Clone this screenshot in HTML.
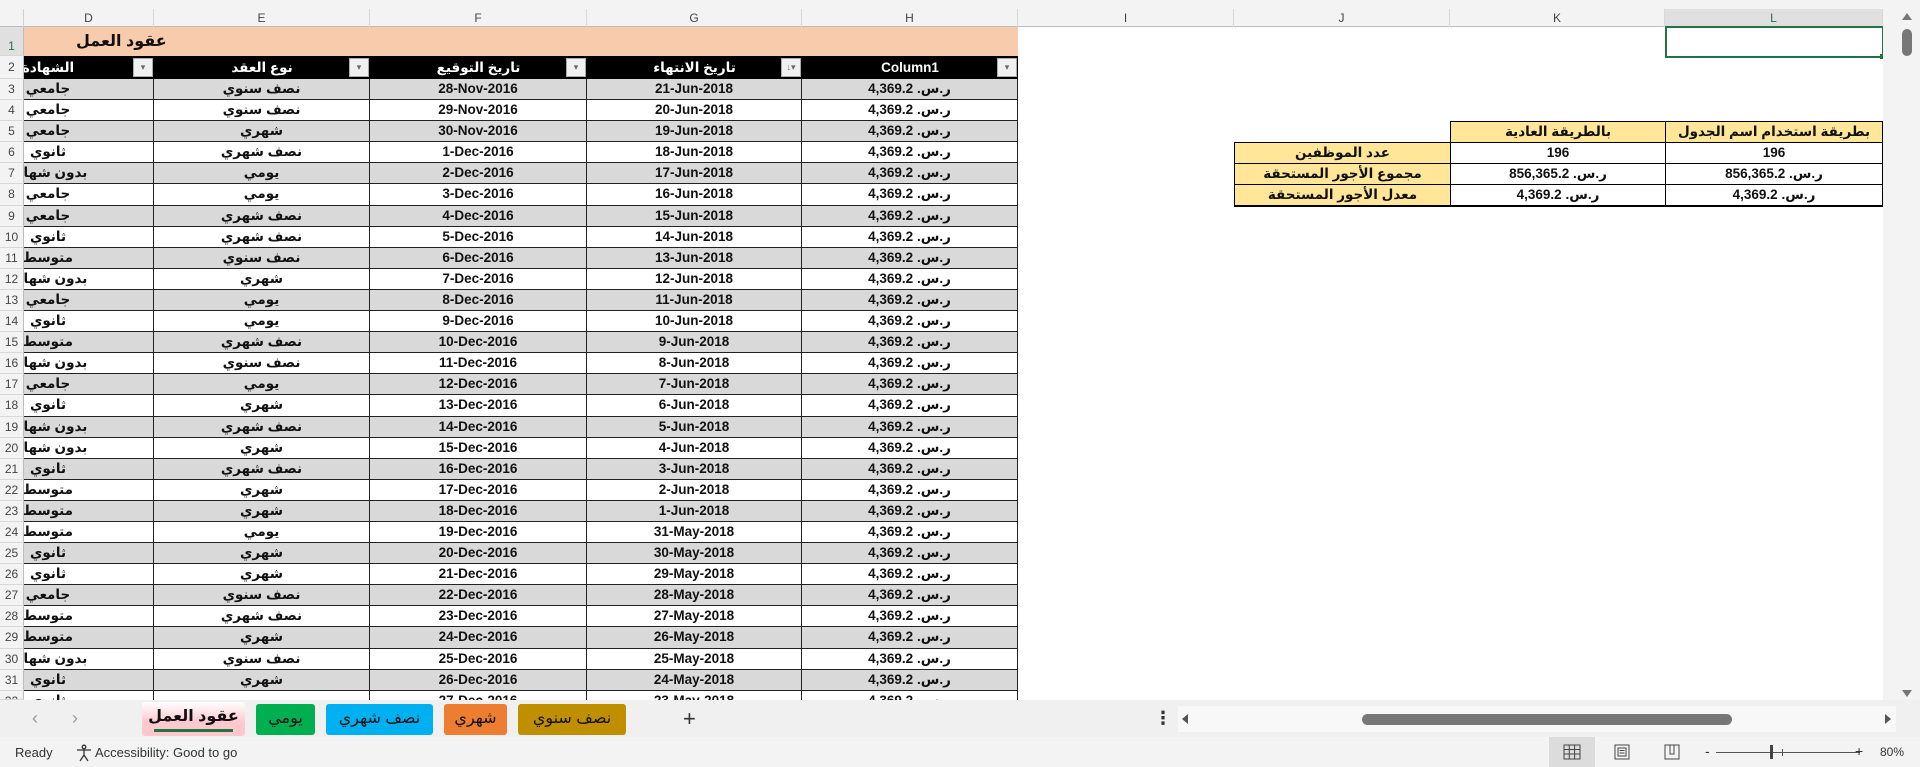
<!DOCTYPE html>
<html><head><meta charset="utf-8"><style>
*{box-sizing:border-box;margin:0;padding:0}
body{width:1920px;height:767px;overflow:hidden;background:#fff;position:relative;font-family:"Liberation Sans","DejaVu Sans",sans-serif}
.abs{position:absolute}
.top{left:0;top:0;width:1920px;height:27px;background:#f3f3f3;border-bottom:1px solid #bdbdbd}
.ch{position:absolute;top:9px;height:18px;font-size:12px;color:#444;text-align:center;line-height:18px;border-right:1px solid #d8d8d8}
.rh{position:absolute;left:0;width:24px;background:#f3f3f3;font-size:12px;color:#444;text-align:center;border-bottom:1px solid #d8d8d8;border-right:1px solid #bdbdbd}
.rows{position:absolute;left:24px;top:79px;width:994px}
.r{display:flex;height:21.1px;border-bottom:1px solid #222;font-weight:bold;font-size:13.5px;line-height:20px;color:#111}
.r.g{background:#d9d9d9}
.r>div{border-right:1px solid #222;text-align:center;overflow:hidden;white-space:nowrap;position:relative}
.d{width:130px}.d span{position:absolute;left:-76px;width:200px;text-align:center;direction:rtl}
.e{width:216px}.f{width:217px}.gg{width:215px}.h{width:216px;direction:rtl}
.hdr{position:absolute;left:24px;top:56px;width:994px;height:23px;background:#000;display:flex;color:#fff;font-weight:bold;font-size:13.5px;line-height:23px}
.hdr>div{position:relative;text-align:center;overflow:hidden;white-space:nowrap}
.btn{position:absolute;right:1px;top:2px;width:20px;height:19px;background:#f0f0f0;border:1px solid #aaa;color:#666;font-size:9px;line-height:17px;text-align:center}
.rt{position:absolute;border:1.5px solid #000;text-align:center;font-weight:bold;font-size:13.5px;line-height:19px;color:#111}
.tab{position:absolute;top:704px;height:31px;font-size:16px;line-height:29px;text-align:center;color:#111;border-radius:3px}
</style></head><body>
<div class="abs top"></div>
<div class="ch" style="left:24px;width:130px">D</div>
<div class="ch" style="left:154px;width:216px">E</div>
<div class="ch" style="left:370px;width:217px">F</div>
<div class="ch" style="left:587px;width:215px">G</div>
<div class="ch" style="left:802px;width:216px">H</div>
<div class="ch" style="left:1018px;width:216px">I</div>
<div class="ch" style="left:1234px;width:216px">J</div>
<div class="ch" style="left:1450px;width:215px">K</div>
<div class="ch" style="left:1665px;width:218px;background:#e0e0e0;color:#217346">L</div>
<div class="abs" style="left:0;top:9px;width:24px;height:18px;border-right:1px solid #d0d0d0"></div>

<!-- row headers -->
<div class="rh" style="top:27px;height:29px;line-height:38px;color:#217346;background:#e0e0e0">1</div>
<div class="rh" style="top:56px;height:23px;line-height:23px">2</div>
<div class="abs" style="left:0;top:79px;width:24px">
<div class="rh" style="position:relative;height:21.1px;line-height:21px">3</div><div class="rh" style="position:relative;height:21.1px;line-height:21px">4</div><div class="rh" style="position:relative;height:21.1px;line-height:21px">5</div><div class="rh" style="position:relative;height:21.1px;line-height:21px">6</div><div class="rh" style="position:relative;height:21.1px;line-height:21px">7</div><div class="rh" style="position:relative;height:21.1px;line-height:21px">8</div><div class="rh" style="position:relative;height:21.1px;line-height:21px">9</div><div class="rh" style="position:relative;height:21.1px;line-height:21px">10</div><div class="rh" style="position:relative;height:21.1px;line-height:21px">11</div><div class="rh" style="position:relative;height:21.1px;line-height:21px">12</div><div class="rh" style="position:relative;height:21.1px;line-height:21px">13</div><div class="rh" style="position:relative;height:21.1px;line-height:21px">14</div><div class="rh" style="position:relative;height:21.1px;line-height:21px">15</div><div class="rh" style="position:relative;height:21.1px;line-height:21px">16</div><div class="rh" style="position:relative;height:21.1px;line-height:21px">17</div><div class="rh" style="position:relative;height:21.1px;line-height:21px">18</div><div class="rh" style="position:relative;height:21.1px;line-height:21px">19</div><div class="rh" style="position:relative;height:21.1px;line-height:21px">20</div><div class="rh" style="position:relative;height:21.1px;line-height:21px">21</div><div class="rh" style="position:relative;height:21.1px;line-height:21px">22</div><div class="rh" style="position:relative;height:21.1px;line-height:21px">23</div><div class="rh" style="position:relative;height:21.1px;line-height:21px">24</div><div class="rh" style="position:relative;height:21.1px;line-height:21px">25</div><div class="rh" style="position:relative;height:21.1px;line-height:21px">26</div><div class="rh" style="position:relative;height:21.1px;line-height:21px">27</div><div class="rh" style="position:relative;height:21.1px;line-height:21px">28</div><div class="rh" style="position:relative;height:21.1px;line-height:21px">29</div><div class="rh" style="position:relative;height:21.1px;line-height:21px">30</div><div class="rh" style="position:relative;height:21.1px;line-height:21px">31</div><div class="rh" style="position:relative;height:9px;line-height:21px;overflow:hidden">32</div>
</div>

<!-- row 1 -->
<div class="abs" style="left:24px;top:27px;width:994px;height:29px;background:#f8cbad"></div>
<div class="abs" style="left:76px;top:29px;font-size:16px;font-weight:bold;line-height:26px;color:#111;direction:rtl">عقود العمل</div>

<!-- header -->
<div class="hdr">
<div style="width:130px"><span style="position:absolute;left:-76px;width:200px;text-align:center">الشهادة</span><div class="btn">▾</div></div>
<div style="width:216px">نوع العقد<div class="btn">▾</div></div>
<div style="width:217px">تاريخ التوقيع<div class="btn">▾</div></div>
<div style="width:215px">تاريخ الانتهاء<div class="btn">↓▾</div></div>
<div style="width:216px">Column1<div class="btn">▾</div></div>
</div>

<div class="abs" style="left:24px;top:79px;width:994px;height:621px;overflow:hidden">
<div class="rows" style="left:0;top:0">
<div class="r g"><div class="d"><span>جامعي</span></div><div class="e">نصف سنوي</div><div class="f">28-Nov-2016</div><div class="gg">21-Jun-2018</div><div class="h">ر.س. 4,369.2</div></div>
<div class="r"><div class="d"><span>جامعي</span></div><div class="e">نصف سنوي</div><div class="f">29-Nov-2016</div><div class="gg">20-Jun-2018</div><div class="h">ر.س. 4,369.2</div></div>
<div class="r g"><div class="d"><span>جامعي</span></div><div class="e">شهري</div><div class="f">30-Nov-2016</div><div class="gg">19-Jun-2018</div><div class="h">ر.س. 4,369.2</div></div>
<div class="r"><div class="d"><span>ثانوي</span></div><div class="e">نصف شهري</div><div class="f">1-Dec-2016</div><div class="gg">18-Jun-2018</div><div class="h">ر.س. 4,369.2</div></div>
<div class="r g"><div class="d"><span>بدون شهادة</span></div><div class="e">يومي</div><div class="f">2-Dec-2016</div><div class="gg">17-Jun-2018</div><div class="h">ر.س. 4,369.2</div></div>
<div class="r"><div class="d"><span>جامعي</span></div><div class="e">يومي</div><div class="f">3-Dec-2016</div><div class="gg">16-Jun-2018</div><div class="h">ر.س. 4,369.2</div></div>
<div class="r g"><div class="d"><span>جامعي</span></div><div class="e">نصف شهري</div><div class="f">4-Dec-2016</div><div class="gg">15-Jun-2018</div><div class="h">ر.س. 4,369.2</div></div>
<div class="r"><div class="d"><span>ثانوي</span></div><div class="e">نصف شهري</div><div class="f">5-Dec-2016</div><div class="gg">14-Jun-2018</div><div class="h">ر.س. 4,369.2</div></div>
<div class="r g"><div class="d"><span>متوسط</span></div><div class="e">نصف سنوي</div><div class="f">6-Dec-2016</div><div class="gg">13-Jun-2018</div><div class="h">ر.س. 4,369.2</div></div>
<div class="r"><div class="d"><span>بدون شهادة</span></div><div class="e">شهري</div><div class="f">7-Dec-2016</div><div class="gg">12-Jun-2018</div><div class="h">ر.س. 4,369.2</div></div>
<div class="r g"><div class="d"><span>جامعي</span></div><div class="e">يومي</div><div class="f">8-Dec-2016</div><div class="gg">11-Jun-2018</div><div class="h">ر.س. 4,369.2</div></div>
<div class="r"><div class="d"><span>ثانوي</span></div><div class="e">يومي</div><div class="f">9-Dec-2016</div><div class="gg">10-Jun-2018</div><div class="h">ر.س. 4,369.2</div></div>
<div class="r g"><div class="d"><span>متوسط</span></div><div class="e">نصف شهري</div><div class="f">10-Dec-2016</div><div class="gg">9-Jun-2018</div><div class="h">ر.س. 4,369.2</div></div>
<div class="r"><div class="d"><span>بدون شهادة</span></div><div class="e">نصف سنوي</div><div class="f">11-Dec-2016</div><div class="gg">8-Jun-2018</div><div class="h">ر.س. 4,369.2</div></div>
<div class="r g"><div class="d"><span>جامعي</span></div><div class="e">يومي</div><div class="f">12-Dec-2016</div><div class="gg">7-Jun-2018</div><div class="h">ر.س. 4,369.2</div></div>
<div class="r"><div class="d"><span>ثانوي</span></div><div class="e">شهري</div><div class="f">13-Dec-2016</div><div class="gg">6-Jun-2018</div><div class="h">ر.س. 4,369.2</div></div>
<div class="r g"><div class="d"><span>بدون شهادة</span></div><div class="e">نصف شهري</div><div class="f">14-Dec-2016</div><div class="gg">5-Jun-2018</div><div class="h">ر.س. 4,369.2</div></div>
<div class="r"><div class="d"><span>بدون شهادة</span></div><div class="e">شهري</div><div class="f">15-Dec-2016</div><div class="gg">4-Jun-2018</div><div class="h">ر.س. 4,369.2</div></div>
<div class="r g"><div class="d"><span>ثانوي</span></div><div class="e">نصف شهري</div><div class="f">16-Dec-2016</div><div class="gg">3-Jun-2018</div><div class="h">ر.س. 4,369.2</div></div>
<div class="r"><div class="d"><span>متوسط</span></div><div class="e">شهري</div><div class="f">17-Dec-2016</div><div class="gg">2-Jun-2018</div><div class="h">ر.س. 4,369.2</div></div>
<div class="r g"><div class="d"><span>متوسط</span></div><div class="e">شهري</div><div class="f">18-Dec-2016</div><div class="gg">1-Jun-2018</div><div class="h">ر.س. 4,369.2</div></div>
<div class="r"><div class="d"><span>متوسط</span></div><div class="e">يومي</div><div class="f">19-Dec-2016</div><div class="gg">31-May-2018</div><div class="h">ر.س. 4,369.2</div></div>
<div class="r g"><div class="d"><span>ثانوي</span></div><div class="e">شهري</div><div class="f">20-Dec-2016</div><div class="gg">30-May-2018</div><div class="h">ر.س. 4,369.2</div></div>
<div class="r"><div class="d"><span>ثانوي</span></div><div class="e">شهري</div><div class="f">21-Dec-2016</div><div class="gg">29-May-2018</div><div class="h">ر.س. 4,369.2</div></div>
<div class="r g"><div class="d"><span>جامعي</span></div><div class="e">نصف سنوي</div><div class="f">22-Dec-2016</div><div class="gg">28-May-2018</div><div class="h">ر.س. 4,369.2</div></div>
<div class="r"><div class="d"><span>متوسط</span></div><div class="e">نصف شهري</div><div class="f">23-Dec-2016</div><div class="gg">27-May-2018</div><div class="h">ر.س. 4,369.2</div></div>
<div class="r g"><div class="d"><span>متوسط</span></div><div class="e">شهري</div><div class="f">24-Dec-2016</div><div class="gg">26-May-2018</div><div class="h">ر.س. 4,369.2</div></div>
<div class="r"><div class="d"><span>بدون شهادة</span></div><div class="e">نصف سنوي</div><div class="f">25-Dec-2016</div><div class="gg">25-May-2018</div><div class="h">ر.س. 4,369.2</div></div>
<div class="r g"><div class="d"><span>ثانوي</span></div><div class="e">شهري</div><div class="f">26-Dec-2016</div><div class="gg">24-May-2018</div><div class="h">ر.س. 4,369.2</div></div>
<div class="r"><div class="d"><span>ثانوي</span></div><div class="e">يومي</div><div class="f">27-Dec-2016</div><div class="gg">23-May-2018</div><div class="h">ر.س. 4,369.2</div></div>
</div></div>

<!-- selected L1 -->
<div class="abs" style="left:1665px;top:26px;width:219px;height:32px;border:2px solid #217346"></div>
<div class="abs" style="left:1880px;top:54px;width:5px;height:5px;background:#217346"></div>

<!-- right table -->
<div class="rt" style="left:1450px;top:121px;width:216px;height:22px;background:#ffe699">بالطريقة العادية</div>
<div class="rt" style="left:1665px;top:121px;width:218px;height:22px;background:#ffe699">بطريقة استخدام اسم الجدول</div>
<div class="rt" style="left:1234px;top:142px;width:217px;height:22px;background:#ffe699">عدد الموظفين</div>
<div class="rt" style="left:1450px;top:142px;width:216px;height:22px;background:#fff">196</div>
<div class="rt" style="left:1665px;top:142px;width:218px;height:22px;background:#fff">196</div>
<div class="rt" style="left:1234px;top:163px;width:217px;height:22px;background:#ffe699">مجموع الأجور المستحقة</div>
<div class="rt" style="left:1450px;top:163px;width:216px;height:22px;background:#fff;direction:rtl">ر.س. 856,365.2</div>
<div class="rt" style="left:1665px;top:163px;width:218px;height:22px;background:#fff;direction:rtl">ر.س. 856,365.2</div>
<div class="rt" style="left:1234px;top:184px;width:217px;height:23px;background:#ffe699;border-bottom-width:2.5px">معدل الأجور المستحقة</div>
<div class="rt" style="left:1450px;top:184px;width:216px;height:23px;background:#fff;direction:rtl;border-bottom-width:2.5px">ر.س. 4,369.2</div>
<div class="rt" style="left:1665px;top:184px;width:218px;height:23px;background:#fff;direction:rtl;border-bottom-width:2.5px">ر.س. 4,369.2</div>

<!-- vertical scrollbar -->
<div class="abs" style="left:1883px;top:0;width:37px;height:700px;background:#f3f3f3"></div>
<div class="abs" style="left:1902px;top:13px;width:0;height:0;border-left:5px solid transparent;border-right:5px solid transparent;border-bottom:7px solid #777"></div>
<div class="abs" style="left:1902px;top:29px;width:10px;height:27px;border-radius:5px;background:#777"></div>
<div class="abs" style="left:1902px;top:690px;width:0;height:0;border-left:5px solid transparent;border-right:5px solid transparent;border-top:7px solid #777"></div>

<!-- tab bar -->
<div class="abs" style="left:0;top:700px;width:1920px;height:37px;background:#f0f0f0"></div>
<div class="abs" style="left:32px;top:708px;color:#999;font-size:18px">&#x2039;</div>
<div class="abs" style="left:72px;top:708px;color:#999;font-size:18px">&#x203A;</div>
<div class="tab" style="left:142px;width:103px;background:linear-gradient(#fff,#ffc7ce 60%);font-weight:bold;top:702px;height:34px">عقود العمل<div style="position:absolute;left:12px;right:12px;bottom:4px;height:3px;background:#217346"></div></div>
<div class="tab" style="left:256px;width:59px;background:#00b050">يومي</div>
<div class="tab" style="left:326px;width:107px;background:#00b0f0">نصف شهري</div>
<div class="tab" style="left:444px;width:63px;background:#ed7d31">شهري</div>
<div class="tab" style="left:518px;width:108px;background:#bf8f00">نصف سنوي</div>
<div class="abs" style="left:683px;top:706px;font-size:22px;color:#333">+</div>
<div class="abs" style="left:1154px;top:708px;font-size:18px;color:#333;font-weight:bold">⋮</div>
<div class="abs" style="left:1178px;top:706px;width:718px;height:26px;background:#f8f8f8"></div>
<div class="abs" style="left:1182px;top:714px;width:0;height:0;border-top:5px solid transparent;border-bottom:5px solid transparent;border-right:6px solid #555"></div>
<div class="abs" style="left:1885px;top:714px;width:0;height:0;border-top:5px solid transparent;border-bottom:5px solid transparent;border-left:6px solid #555"></div>
<div class="abs" style="left:1362px;top:714px;width:370px;height:11px;border-radius:6px;background:#777"></div>

<!-- status bar -->
<div class="abs" style="left:0;top:737px;width:1920px;height:30px;background:#f3f3f3"></div>
<div class="abs" style="left:15px;top:745px;font-size:13px;color:#333">Ready</div>
<svg class="abs" style="left:75px;top:744px" width="18" height="18" viewBox="0 0 18 18" fill="none" stroke="#333" stroke-width="1.3"><circle cx="9" cy="3" r="1.8"/><path d="M2 6h14M9 6v5M9 11l-4 6M9 11l4 6"/></svg>
<div class="abs" style="left:95px;top:745px;font-size:13px;color:#333">Accessibility: Good to go</div>
<div class="abs" style="left:1549px;top:737px;width:46px;height:30px;background:#dcdcdc"></div>
<svg class="abs" style="left:1563px;top:744px" width="18" height="16" viewBox="0 0 18 16" fill="none" stroke="#444" stroke-width="1"><rect x="1" y="1" width="16" height="14"/><path d="M1 5.5h16M1 10h16M6.3 1v14M11.6 1v14"/></svg>
<svg class="abs" style="left:1614px;top:744px" width="16" height="16" viewBox="0 0 16 16" fill="none" stroke="#444" stroke-width="1"><rect x="1" y="1" width="14" height="14"/><rect x="4" y="4" width="8" height="8"/><path d="M5.5 6.5h5M5.5 9h5"/></svg>
<svg class="abs" style="left:1664px;top:744px" width="16" height="16" viewBox="0 0 16 16" fill="none" stroke="#444" stroke-width="1"><rect x="1" y="1" width="14" height="14"/><path d="M6 1v9h4V1"/></svg>
<div class="abs" style="left:1705px;top:743px;font-size:14px;color:#333">-</div>
<div class="abs" style="left:1716px;top:752px;width:144px;height:1px;background:#555"></div>
<div class="abs" style="left:1770px;top:745px;width:3px;height:14px;background:#444"></div>
<div class="abs" style="left:1782px;top:749px;width:1px;height:7px;background:#555"></div>
<div class="abs" style="left:1855px;top:743px;font-size:14px;color:#333">+</div>
<div class="abs" style="left:1880px;top:745px;font-size:12px;color:#333">80%</div>
</body></html>
